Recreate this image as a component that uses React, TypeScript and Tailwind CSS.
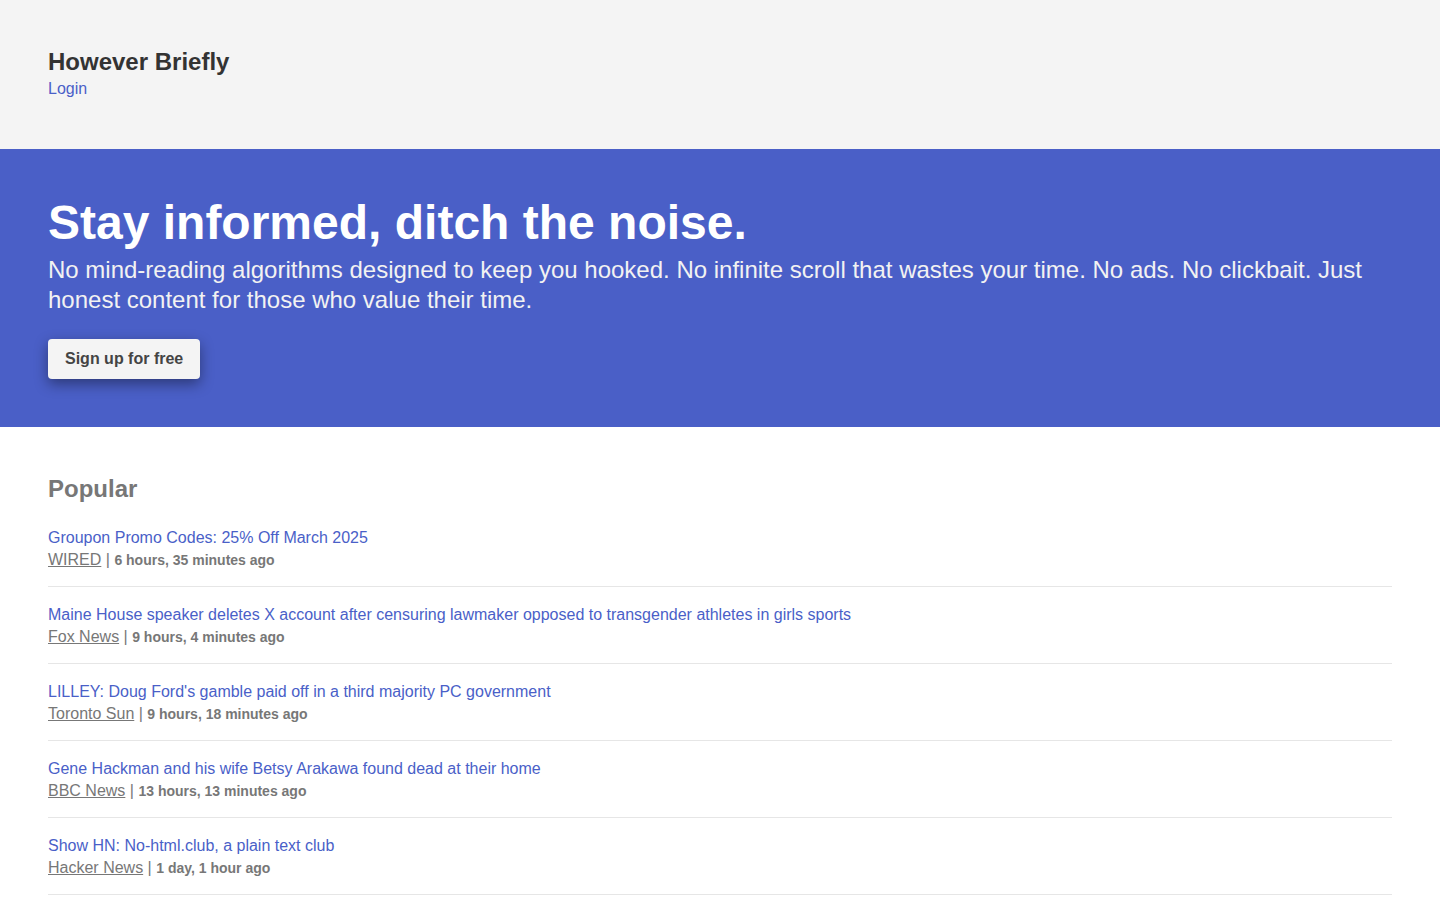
import React from 'react';

const stories = [
  { title: 'Groupon Promo Codes: 25% Off March 2025', source: 'WIRED', time: '6 hours, 35 minutes ago' },
  {
    title: 'Maine House speaker deletes X account after censuring lawmaker opposed to transgender athletes in girls sports',
    source: 'Fox News',
    time: '9 hours, 4 minutes ago',
  },
  { title: "LILLEY: Doug Ford's gamble paid off in a third majority PC government", source: 'Toronto Sun', time: '9 hours, 18 minutes ago' },
  { title: 'Gene Hackman and his wife Betsy Arakawa found dead at their home', source: 'BBC News', time: '13 hours, 13 minutes ago' },
  { title: 'Show HN: No-html.club, a plain text club', source: 'Hacker News', time: '1 day, 1 hour ago' },
];

const App: React.FC = () => {
  return (
    <div className="min-h-screen bg-white font-['Liberation_Sans',Arial,sans-serif]">
      {/* Header */}
      <header className="bg-[#f4f4f4] px-12 pt-12 pb-[51px]">
        <h1 className="text-2xl leading-7 font-bold text-[#333]">However Briefly</h1>
        <a href="#" className="block mt-1 text-base leading-[18px] text-[#4a5fc8]">
          Login
        </a>
      </header>

      {/* Hero */}
      <section className="bg-[#4a5fc7] px-12 py-12">
        <h2 className="text-5xl leading-[52px] font-bold text-white">Stay informed, ditch the noise.</h2>
        <p className="mt-[6px] text-2xl leading-[30px] text-[#f2f2f2]">
          No mind-reading algorithms designed to keep you hooked. No infinite scroll that wastes your time. No ads. No
          clickbait. Just honest content for those who value their time.
        </p>
        <button className="mt-6 h-10 px-[17px] rounded bg-[#f4f4f4] text-base font-bold text-[#444] shadow-[0_5px_14px_rgba(0,0,0,0.4)]">
          Sign up for free
        </button>
      </section>

      {/* Popular */}
      <main className="px-12 pt-12">
        <h3 className="text-2xl leading-7 font-bold text-[#777] mb-[7px]">Popular</h3>
        <ul>
          {stories.map((s) => (
            <li key={s.title} className="pt-[19px] pb-[17px] border-b border-[#e6e6e6]">
              <a href="#" className="block text-base leading-[18px] text-[#4a5fc8]">
                {s.title}
              </a>
              <div className="mt-1 text-base leading-[18px] text-[#777]">
                <a href="#" className="underline">
                  {s.source}
                </a>{' '}
                | <span className="text-sm leading-[18px] font-bold">{s.time}</span>
              </div>
            </li>
          ))}
        </ul>
      </main>
    </div>
  );
};

export default App;
